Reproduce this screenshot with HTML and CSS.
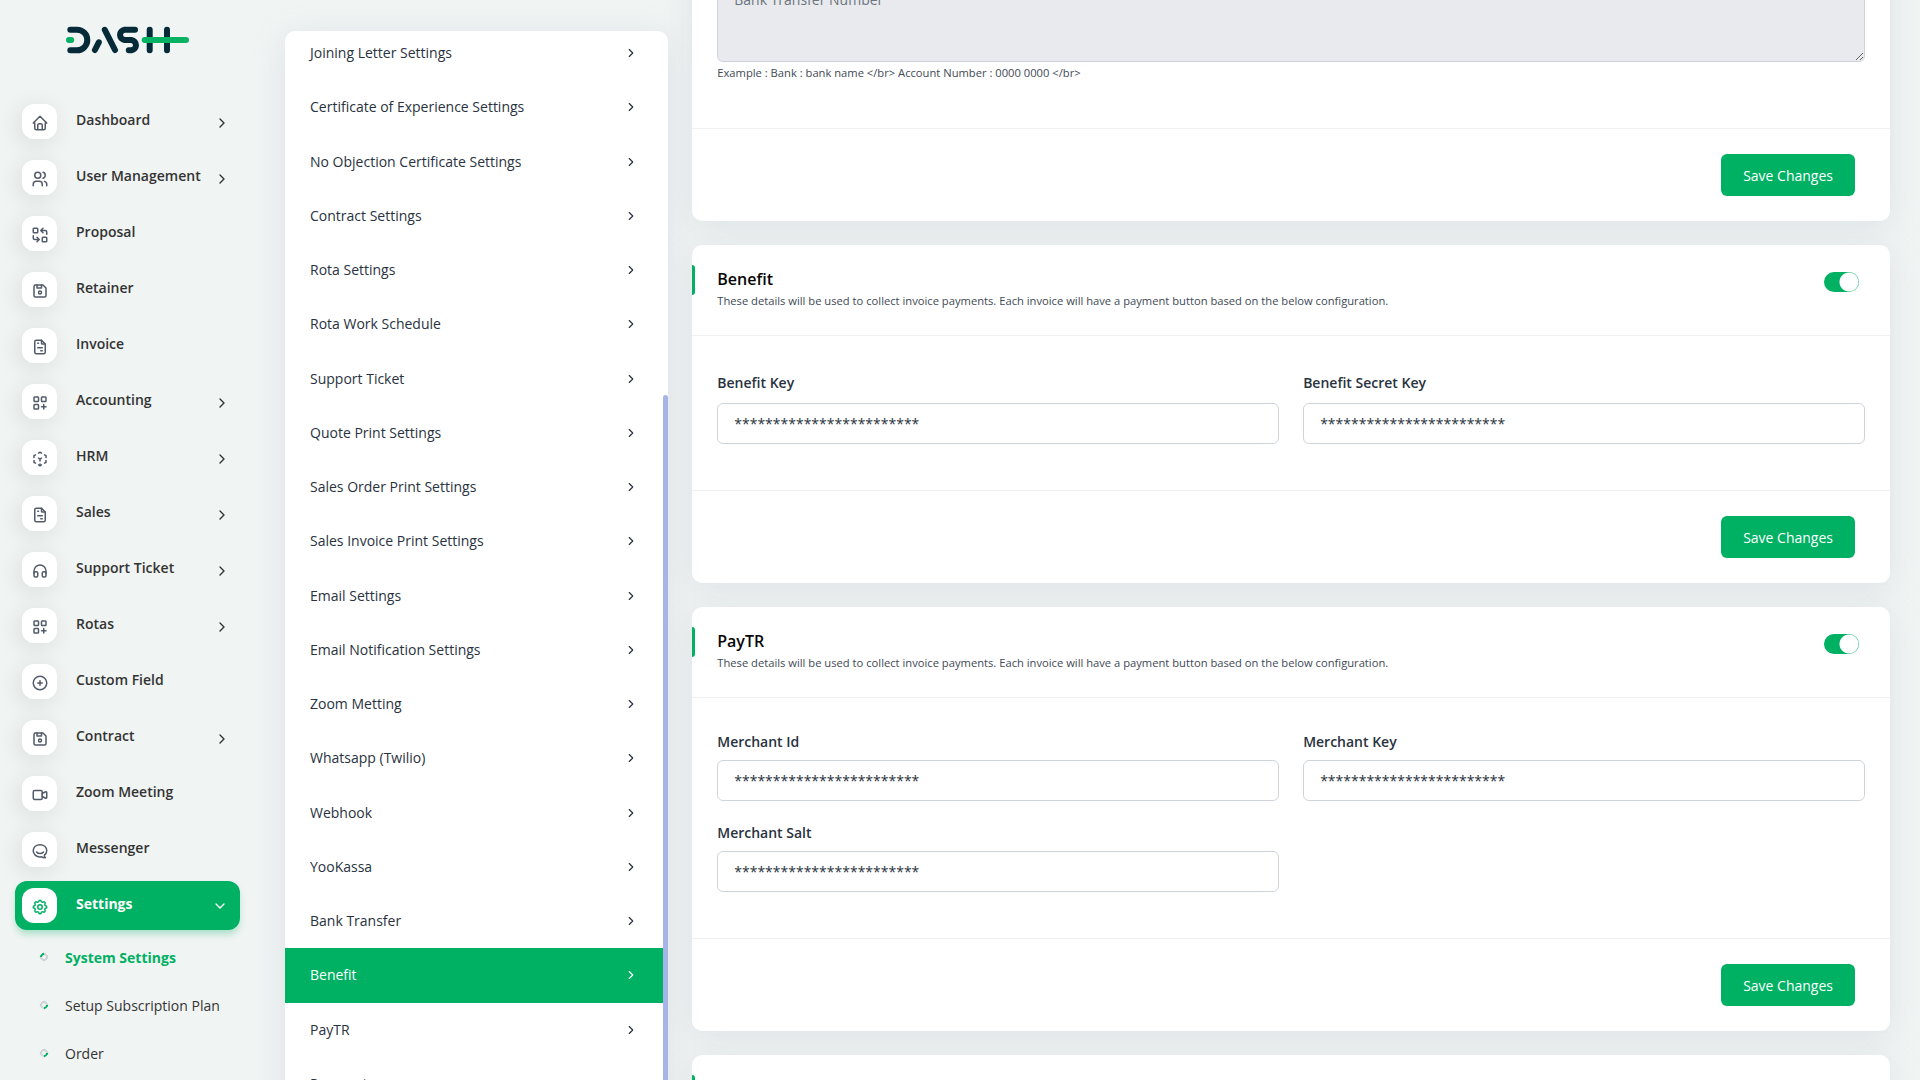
FILE: index.html
```html
<!DOCTYPE html>
<html lang="en">

<head>
    <meta charset="UTF-8">
    <meta name="viewport" content="width=device-width, initial-scale=1.0">
    <title>Settings | Dash</title>
    <link rel="stylesheet" href="styles.css">
</head>

<body>

    <!-- icon set -->
    <svg class="icon-set" aria-hidden="true">
        <symbol id="home" viewBox="0 0 24 24">
            <path d="M5 12H3l9-9 9 9h-2M5 12v7a2 2 0 0 0 2 2h10a2 2 0 0 0 2-2v-7M9 21v-6a2 2 0 0 1 2-2h2a2 2 0 0 1 2 2v6" />
        </symbol>
        <symbol id="users" viewBox="0 0 24 24">
            <circle cx="9" cy="7" r="4" />
            <path d="M3 21v-2a4 4 0 0 1 4-4h4a4 4 0 0 1 4 4v2M16 3.13a4 4 0 0 1 0 7.75M21 21v-2a4 4 0 0 0-3-3.85" />
        </symbol>
        <symbol id="replace" viewBox="0 0 24 24">
            <rect x="3" y="3" width="6" height="6" rx="1" />
            <rect x="15" y="15" width="6" height="6" rx="1" />
            <path d="M21 11V8a2 2 0 0 0-2-2h-6l3 3m0-6-3 3M3 13v3a2 2 0 0 0 2 2h6l-3-3m0 6 3-3" />
        </symbol>
        <symbol id="floppy" viewBox="0 0 24 24">
            <path d="M6 4h10l4 4v10a2 2 0 0 1-2 2H6a2 2 0 0 1-2-2V6a2 2 0 0 1 2-2" />
            <circle cx="12" cy="14" r="2" />
            <path d="M14 4v4H8V4" />
        </symbol>
        <symbol id="invoice" viewBox="0 0 24 24">
            <path d="M14 3v4a1 1 0 0 0 1 1h4" />
            <path d="M17 21H7a2 2 0 0 1-2-2V5a2 2 0 0 1 2-2h7l5 5v11a2 2 0 0 1-2 2zM9 7h1M9 13h6M13 17h2" />
        </symbol>
        <symbol id="grid-add" viewBox="0 0 24 24">
            <rect x="4" y="4" width="6" height="6" rx="1" />
            <rect x="14" y="4" width="6" height="6" rx="1" />
            <rect x="4" y="14" width="6" height="6" rx="1" />
            <path d="M14 17h6M17 14v6" />
        </symbol>
        <symbol id="cube" viewBox="0 0 24 24">
            <path d="M6 17.6l-2-1.1V14M4 10V7.5l2-1.1M10 4.1L12 3l2 1.1M18 6.4l2 1.1V10M20 14v2.5l-2 1.1M14 19.9L12 21l-2-1.1M12 12l2-1.1M12 12v2.5M12 18.5V21M12 12l-2-1.1" />
        </symbol>
        <symbol id="headphones" viewBox="0 0 24 24">
            <rect x="4" y="13" width="5" height="7" rx="2" />
            <rect x="15" y="13" width="5" height="7" rx="2" />
            <path d="M4 15v-3a8 8 0 0 1 16 0v3" />
        </symbol>
        <symbol id="circle-plus" viewBox="0 0 24 24">
            <circle cx="12" cy="12" r="9" />
            <path d="M9 12h6M12 9v6" />
        </symbol>
        <symbol id="video" viewBox="0 0 24 24">
            <path d="M15 10l4.55-2.28A1 1 0 0 1 21 8.62v6.76a1 1 0 0 1-1.45.9L15 14z" />
            <rect x="3" y="6" width="12" height="12" rx="2" />
        </symbol>
        <symbol id="chat" viewBox="0 0 24 24">
            <path d="M17.8 17.4c2-1.5 3.2-3.4 3.2-5.9C21 6.8 17 3.5 12 3.5s-9 3.3-9 8 4 8.5 9 8.5c.7 0 1.4-.1 2.1-.2 1.2.8 3 1.4 4.9 1.2-.8-.9-1.2-2.2-1.2-3.6" />
            <path d="M7.5 13.5c2.5 2.6 6.5 2.6 9 0" />
        </symbol>
        <symbol id="gear" viewBox="0 0 24 24">
            <path d="M10.325 4.317c.426-1.756 2.924-1.756 3.35 0a1.724 1.724 0 0 0 2.573 1.066c1.543-.94 3.31.826 2.37 2.37a1.724 1.724 0 0 0 1.065 2.572c1.756.426 1.756 2.924 0 3.35a1.724 1.724 0 0 0-1.066 2.573c.94 1.543-.826 3.31-2.37 2.37a1.724 1.724 0 0 0-2.572 1.065c-.426 1.756-2.924 1.756-3.35 0a1.724 1.724 0 0 0-2.573-1.066c-1.543.94-3.31-.826-2.37-2.37a1.724 1.724 0 0 0-1.065-2.572c-1.756-.426-1.756-2.924 0-3.35a1.724 1.724 0 0 0 1.066-2.573c-.94-1.543.826-3.31 2.37-2.37 1 .608 2.296.07 2.572-1.065z" />
            <circle cx="12" cy="12" r="3" />
        </symbol>
        <symbol id="right" viewBox="0 0 24 24">
            <path d="M9 6l6 6-6 6" />
        </symbol>
        <symbol id="down" viewBox="0 0 24 24">
            <path d="M6 9l6 6 6-6" />
        </symbol>
    </svg>

    <aside class="sidebar">
        <a class="logo" href="#" aria-label="Dash">
            <svg viewBox="66 26 123 28" width="123" height="28">
                <g class="logo-dark">
                    <path d="M70.3 29.7H77a10.3 10.3 0 0 1 0 20.6H70.3" />
                    <path d="M98.8 42.3L94.9 50" />
                    <path d="M104.8 29.8L115 50" />
                    <path d="M135 29.7H124.5a5.2 5.2 0 0 0 0 10.3H131.5a5.2 5.2 0 0 1 0 10.3H128.8" />
                    <path d="M149.7 29.7V50.3M167 29.7V50.3" />
                </g>
                <path class="logo-green" d="M69 40H71.2M144.7 40H186" />
            </svg>
        </a>

        <nav class="menu">
            <a class="menu-link" href="#"><span class="menu-icon"><svg><use href="#home" /></svg></span><span class="menu-text">Dashboard</span><svg class="menu-arrow"><use href="#right" /></svg></a>
            <a class="menu-link" href="#"><span class="menu-icon"><svg><use href="#users" /></svg></span><span class="menu-text">User Management</span><svg class="menu-arrow"><use href="#right" /></svg></a>
            <a class="menu-link" href="#"><span class="menu-icon"><svg><use href="#replace" /></svg></span><span class="menu-text">Proposal</span></a>
            <a class="menu-link" href="#"><span class="menu-icon"><svg><use href="#floppy" /></svg></span><span class="menu-text">Retainer</span></a>
            <a class="menu-link" href="#"><span class="menu-icon"><svg><use href="#invoice" /></svg></span><span class="menu-text">Invoice</span></a>
            <a class="menu-link" href="#"><span class="menu-icon"><svg><use href="#grid-add" /></svg></span><span class="menu-text">Accounting</span><svg class="menu-arrow"><use href="#right" /></svg></a>
            <a class="menu-link" href="#"><span class="menu-icon"><svg><use href="#cube" /></svg></span><span class="menu-text">HRM</span><svg class="menu-arrow"><use href="#right" /></svg></a>
            <a class="menu-link" href="#"><span class="menu-icon"><svg><use href="#invoice" /></svg></span><span class="menu-text">Sales</span><svg class="menu-arrow"><use href="#right" /></svg></a>
            <a class="menu-link" href="#"><span class="menu-icon"><svg><use href="#headphones" /></svg></span><span class="menu-text">Support Ticket</span><svg class="menu-arrow"><use href="#right" /></svg></a>
            <a class="menu-link" href="#"><span class="menu-icon"><svg><use href="#grid-add" /></svg></span><span class="menu-text">Rotas</span><svg class="menu-arrow"><use href="#right" /></svg></a>
            <a class="menu-link" href="#"><span class="menu-icon"><svg><use href="#circle-plus" /></svg></span><span class="menu-text">Custom Field</span></a>
            <a class="menu-link" href="#"><span class="menu-icon"><svg><use href="#floppy" /></svg></span><span class="menu-text">Contract</span><svg class="menu-arrow"><use href="#right" /></svg></a>
            <a class="menu-link" href="#"><span class="menu-icon"><svg><use href="#video" /></svg></span><span class="menu-text">Zoom Meeting</span></a>
            <a class="menu-link" href="#"><span class="menu-icon"><svg><use href="#chat" /></svg></span><span class="menu-text">Messenger</span></a>
            <a class="menu-link active" href="#"><span class="menu-icon"><svg><use href="#gear" /></svg></span><span class="menu-text">Settings</span><svg class="menu-arrow"><use href="#down" /></svg></a>
        </nav>

        <nav class="submenu">
            <a class="submenu-link active" href="#">System Settings</a>
            <a class="submenu-link" href="#">Setup Subscription Plan</a>
            <a class="submenu-link" href="#">Order</a>
        </nav>
    </aside>

    <main class="content">
        <div class="settings-nav">
            <nav class="settings-list">
                <a class="settings-link" href="#">Joining Letter Settings<svg><use href="#right" /></svg></a>
                <a class="settings-link" href="#">Certificate of Experience Settings<svg><use href="#right" /></svg></a>
                <a class="settings-link" href="#">No Objection Certificate Settings<svg><use href="#right" /></svg></a>
                <a class="settings-link" href="#">Contract Settings<svg><use href="#right" /></svg></a>
                <a class="settings-link" href="#">Rota Settings<svg><use href="#right" /></svg></a>
                <a class="settings-link" href="#">Rota Work Schedule<svg><use href="#right" /></svg></a>
                <a class="settings-link" href="#">Support Ticket<svg><use href="#right" /></svg></a>
                <a class="settings-link" href="#">Quote Print Settings<svg><use href="#right" /></svg></a>
                <a class="settings-link" href="#">Sales Order Print Settings<svg><use href="#right" /></svg></a>
                <a class="settings-link" href="#">Sales Invoice Print Settings<svg><use href="#right" /></svg></a>
                <a class="settings-link" href="#">Email Settings<svg><use href="#right" /></svg></a>
                <a class="settings-link" href="#">Email Notification Settings<svg><use href="#right" /></svg></a>
                <a class="settings-link" href="#">Zoom Metting<svg><use href="#right" /></svg></a>
                <a class="settings-link" href="#">Whatsapp (Twilio)<svg><use href="#right" /></svg></a>
                <a class="settings-link" href="#">Webhook<svg><use href="#right" /></svg></a>
                <a class="settings-link" href="#">YooKassa<svg><use href="#right" /></svg></a>
                <a class="settings-link" href="#">Bank Transfer<svg><use href="#right" /></svg></a>
                <a class="settings-link active" href="#benefit">Benefit<svg><use href="#right" /></svg></a>
                <a class="settings-link" href="#paytr">PayTR<svg><use href="#right" /></svg></a>
                <a class="settings-link" href="#payment">Payment<svg><use href="#right" /></svg></a>
            </nav>
            <div class="scroll-thumb"></div>
        </div>

        <div class="cards">
            <form class="card">
                <div class="card-body">
                    <textarea class="form-control" aria-label="Bank Transfer Number" placeholder="Bank Transfer Number" disabled></textarea>
                    <small class="hint">Example : Bank : bank name &lt;/br&gt; Account Number : 0000 0000 &lt;/br&gt;</small>
                </div>
                <div class="card-footer">
                    <button class="btn" type="button">Save Changes</button>
                </div>
            </form>

            <form class="card" id="benefit">
                <div class="card-header">
                    <div>
                        <h5>Benefit</h5>
                        <small>These details will be used to collect invoice payments. Each invoice will have a payment button based on the below configuration.</small>
                    </div>
                    <input class="switch" type="checkbox" aria-label="Enable Benefit" checked>
                </div>
                <div class="card-body fields">
                    <div class="field tall">
                        <label for="benefit_key">Benefit Key</label>
                        <input class="form-control" type="text" id="benefit_key" value="************************">
                    </div>
                    <div class="field tall">
                        <label for="benefit_secret">Benefit Secret Key</label>
                        <input class="form-control" type="text" id="benefit_secret" value="************************">
                    </div>
                </div>
                <div class="card-footer">
                    <button class="btn" type="button">Save Changes</button>
                </div>
            </form>

            <form class="card" id="paytr">
                <div class="card-header">
                    <div>
                        <h5>PayTR</h5>
                        <small>These details will be used to collect invoice payments. Each invoice will have a payment button based on the below configuration.</small>
                    </div>
                    <input class="switch" type="checkbox" aria-label="Enable PayTR" checked>
                </div>
                <div class="card-body fields">
                    <div class="field">
                        <label for="merchant_id">Merchant Id</label>
                        <input class="form-control" type="text" id="merchant_id" value="************************">
                    </div>
                    <div class="field">
                        <label for="merchant_key">Merchant Key</label>
                        <input class="form-control" type="text" id="merchant_key" value="************************">
                    </div>
                    <div class="field">
                        <label for="merchant_salt">Merchant Salt</label>
                        <input class="form-control" type="text" id="merchant_salt" value="************************">
                    </div>
                </div>
                <div class="card-footer">
                    <button class="btn" type="button">Save Changes</button>
                </div>
            </form>

            <section class="card" id="payment">
                <div class="card-header"></div>
            </section>
        </div>
    </main>

</body>

</html>
```
FILE: styles.css
```css
*,
*::before {
    box-sizing: border-box;
}

body {
    margin: 0;
    height: 100vh;
    display: flex;
    overflow: hidden;
    background-color: #f0f4f3;
    color: #293240;
    font-family: "Open Sans", sans-serif;
    font-size: 14px;
    line-height: 1.5;
}

a {
    color: inherit;
    text-decoration: none;
}

svg {
    fill: none;
    stroke: currentColor;
    stroke-width: 2;
    stroke-linecap: round;
    stroke-linejoin: round;
    flex-shrink: 0;
}

.icon-set {
    display: none;
}

/* sidebar */
.sidebar {
    flex: 0 0 280px;
    padding: 0 40px 0 15px;
}

.logo {
    display: block;
    height: 97px;
    padding: 26px 0 0 51px;
}

.logo svg {
    display: block;
    stroke-width: 6;
}

.logo-dark {
    stroke: #062a38;
}

.logo-green {
    stroke: #08b263;
}

.menu {
    display: flex;
    flex-direction: column;
    gap: 7px;
}

.menu-link {
    display: flex;
    align-items: center;
    height: 49px;
    padding: 0 9px 0 7px;
    border-radius: 12px;
    color: #333;
    font-weight: 600;
}

.menu-icon {
    display: flex;
    justify-content: center;
    width: 35px;
    height: 35px;
    padding-top: 10px;
    border-radius: 12px;
    background-color: #fff;
    color: #525b69;
    box-shadow: -3px 4px 23px rgba(0, 0, 0, 0.1);
}

.menu-icon svg {
    width: 18px;
    height: 18px;
}

.menu-text {
    flex: 1;
    padding: 0 0 4px 19px;
}

.menu-arrow {
    width: 18px;
    height: 16px;
    margin-top: 3px;
}

.menu-link.active {
    background-color: #00b063;
    color: #fff;
    font-weight: 700;
    box-shadow: 0 5px 7px -1px rgba(0, 176, 99, 0.3);
}

.menu-link.active .menu-icon {
    color: #00b063;
    box-shadow: none;
}

.menu-link.active .menu-arrow {
    margin-top: 0;
    margin-right: 2px;
}

.submenu {
    padding-top: 3px;
}

.submenu-link {
    display: flex;
    align-items: center;
    gap: 17px;
    height: 48px;
    padding-left: 25px;
    color: #333;
    font-weight: 500;
}

.submenu-link::before {
    content: "";
    width: 8px;
    height: 8px;
    border: 2px solid #ced4d6;
    border-right-color: #00b063;
    border-radius: 50%;
    transform: rotate(45deg);
}

.submenu-link.active {
    color: #00b063;
    font-weight: 700;
}

.submenu-link.active::before {
    transform: rotate(-135deg);
}

/* content */
.content {
    flex: 1;
    display: flex;
    align-items: flex-start;
    gap: 24px;
    padding: 0 30px 0 5px;
}

.settings-nav {
    position: relative;
    flex: 0 0 calc(25% - 18px);
    margin-top: 31px;
    overflow: hidden;
    border-radius: 10px;
    background-color: #fff;
    box-shadow: 0 6px 30px rgba(182, 186, 203, 0.3);
}

/* list is scrolled a little past its first entry */
.settings-list {
    margin: -5px 5px 0 0;
}

.settings-link {
    display: flex;
    align-items: center;
    justify-content: space-between;
    padding: 16px 25px;
    line-height: 1.59;
}

.settings-link svg {
    width: 14px;
    height: 14px;
}

.settings-link.active {
    background-color: #00b063;
    color: #fff;
}

.scroll-thumb {
    position: absolute;
    top: 364px;
    right: 0;
    bottom: 0;
    width: 5px;
    border-radius: 5px;
    background-color: #a7b5e6;
}

.cards {
    flex: 1;
    display: flex;
    flex-direction: column;
    gap: 24px;
    margin-top: -57px;
}

.card {
    border-radius: 10px;
    background-color: #fff;
    box-shadow: 0 6px 30px rgba(182, 186, 203, 0.3);
}

.card-header {
    position: relative;
    display: flex;
    justify-content: space-between;
    min-height: 91px;
    padding: 22px 31px 0 25px;
    border-bottom: 1px solid #f1f1f1;
}

.card-header::before {
    content: "";
    position: absolute;
    left: 0;
    top: 20px;
    width: 3px;
    height: 30px;
    border-radius: 0 3px 3px 0;
    background-color: #00b063;
}

h5 {
    margin: 0;
    color: #060606;
    font-size: 16px;
    font-weight: 600;
    line-height: 24px;
}

small {
    display: block;
    color: #414a56;
    font-size: 80%;
    line-height: 20px;
}

.switch {
    appearance: none;
    width: 35px;
    height: 20px;
    margin: 5px 0 0;
    border-radius: 10px;
    background: #00b063 radial-gradient(circle at 25px 10px, #fff 9px, transparent 10px);
}

.card-body {
    padding: 34px 25px 46px;
}

.fields {
    display: grid;
    grid-template-columns: 1fr 1fr;
    gap: 22px 24px;
}

label {
    display: block;
    margin-bottom: 8px;
    font-weight: 600;
    line-height: 20px;
}

.tall label {
    line-height: 25px;
}

.form-control {
    display: block;
    width: 100%;
    height: 41px;
    padding: 9px 16px;
    border: 1px solid #ced4da;
    border-radius: 6px;
    background-color: #fff;
    color: #293240;
    font: inherit;
}

textarea.form-control {
    height: 85px;
    padding-top: 11px;
    background-color: #e9eaee;
}

.form-control::placeholder {
    color: #6c757d;
}

.hint {
    padding-top: 2px;
    line-height: 18px;
}

.card-footer {
    display: flex;
    justify-content: flex-end;
    padding: 25px 35px;
    border-top: 1px solid #f1f1f1;
}

.btn {
    height: 42px;
    padding: 0 22px;
    border: none;
    border-radius: 6px;
    background-color: #00b063;
    color: #fff;
    font: inherit;
    font-weight: 500;
    cursor: pointer;
}
```
